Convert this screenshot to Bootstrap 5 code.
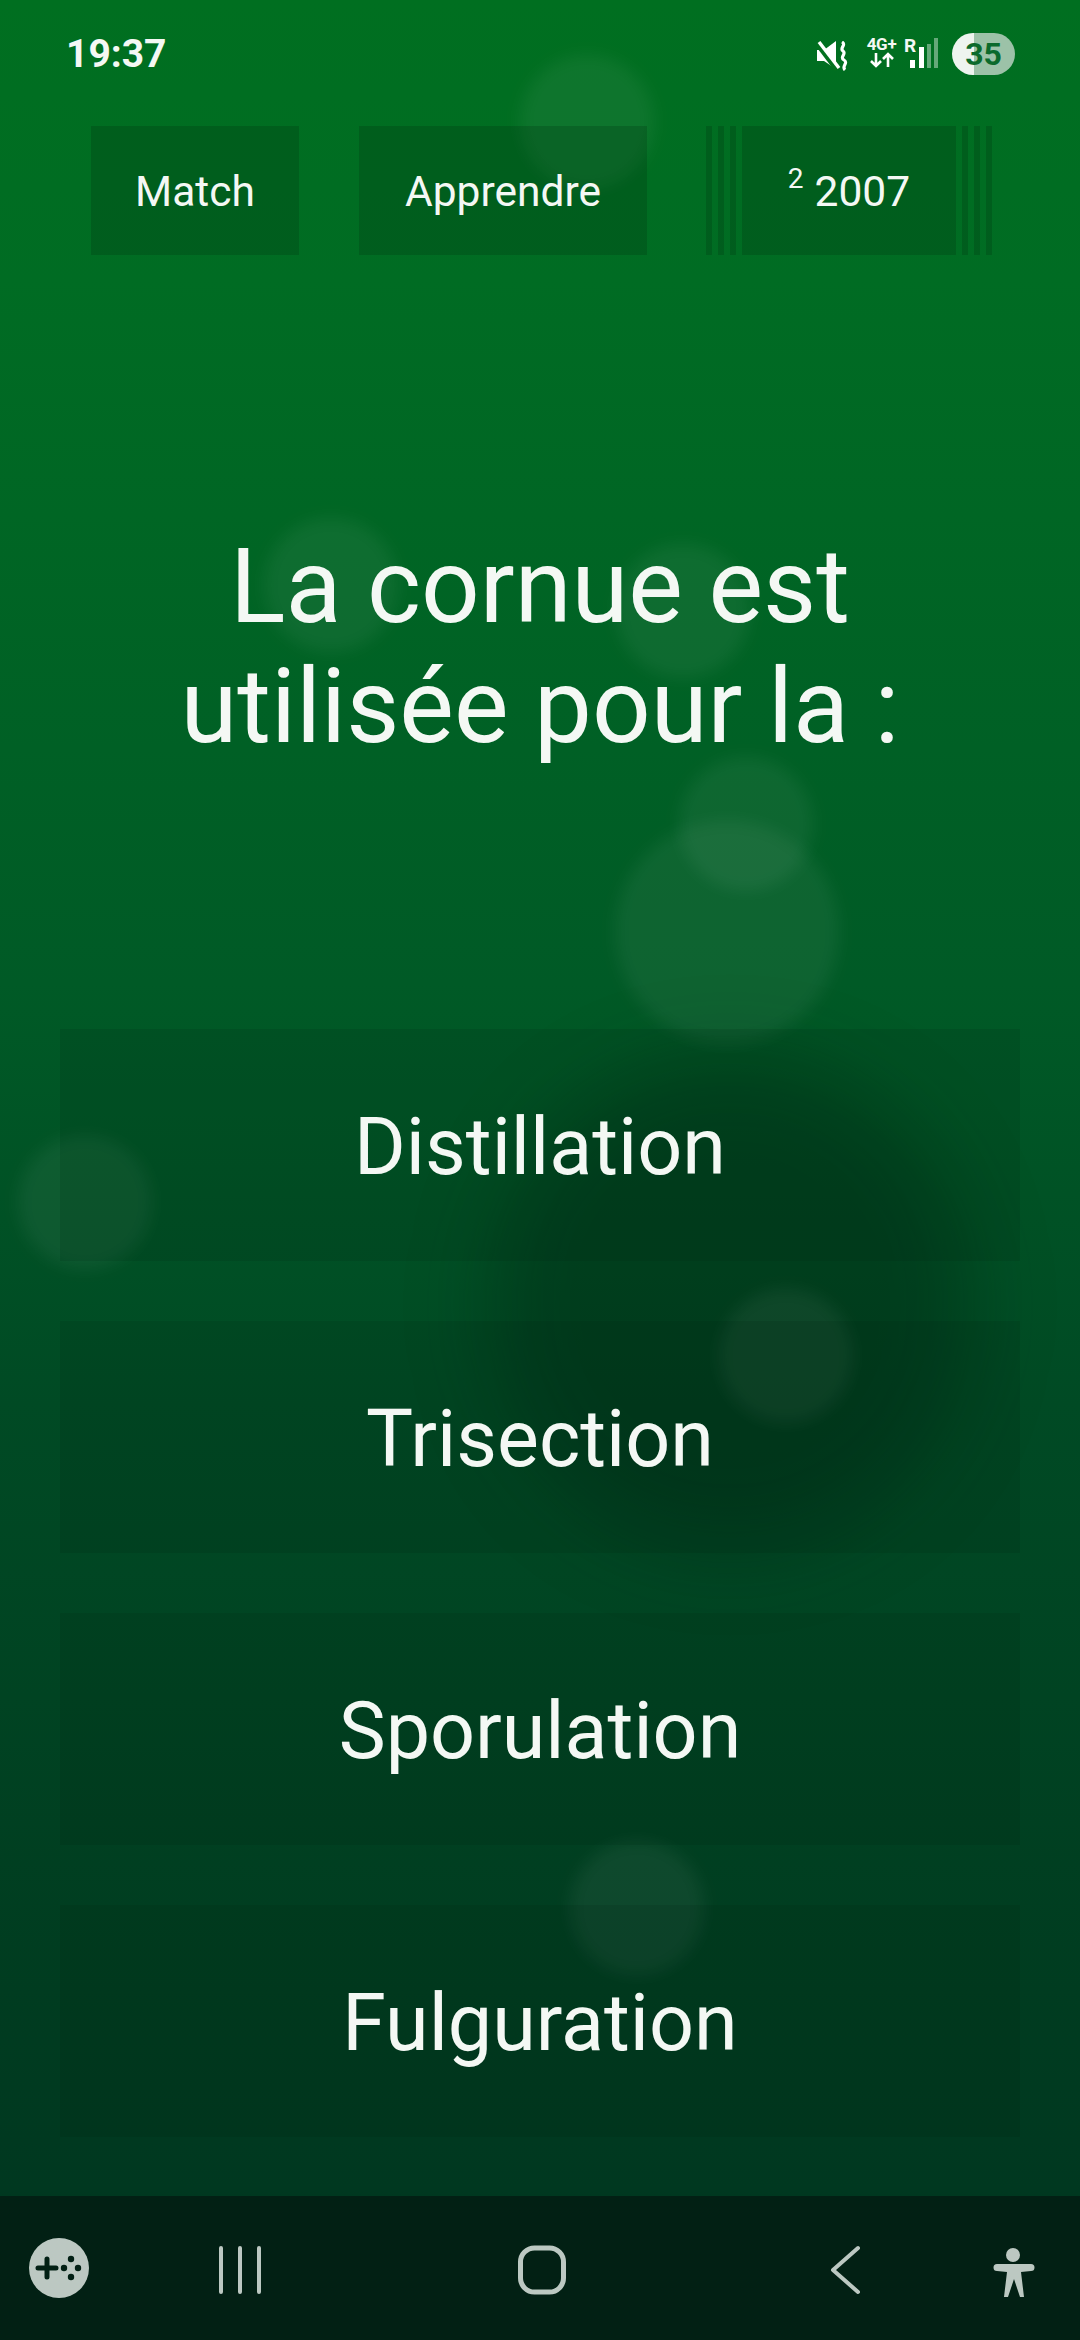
<!DOCTYPE html>
<html lang="fr">

<head>
    <meta charset="UTF-8">
    <meta name="viewport" content="width=device-width, initial-scale=1.0">
    <title>Quiz</title>
    <link href="https://cdn.jsdelivr.net/npm/bootstrap@5.3.2/dist/css/bootstrap.min.css" rel="stylesheet">
    <style>
        body {
            margin: 0;
            width: 1080px;
            height: 2340px;
            overflow: hidden;
            font-family: Roboto, sans-serif;
            color: #f4f8f4;
        }

        .screen {
            width: 1080px;
            height: 2340px;
            overflow: hidden;
            background: linear-gradient(180deg, #006f20 0%, #006c23 12%, #005a26 42%, #004a24 60%, #003c20 85%, #003520 100%);
        }

        /* floating decoration, sits under the page content */
        .bubble {
            position: absolute;
            border-radius: 50%;
            background: rgba(255, 255, 255, .055);
            filter: blur(8px);
            pointer-events: none;
        }

        .bubble-dark {
            position: absolute;
            left: 490px;
            top: 1060px;
            width: 480px;
            height: 490px;
            border-radius: 50%;
            background: rgba(0, 30, 15, .34);
            filter: blur(40px);
            pointer-events: none;
        }

        .page-flow {
            z-index: 1;
        }

        .status-row {
            height: 126px;
            padding: 33px 65px 0 66px;
        }

        .clock {
            font-size: 39px;
            font-weight: 700;
            line-height: 42px;
        }

        .mute-icon {
            margin-right: 16px;
        }

        .net-box {
            width: 33px;
            margin-right: 9px;
            margin-top: 4px;
        }

        .net-label {
            font-size: 17px;
            font-weight: 700;
            line-height: 15px;
            letter-spacing: -.3px;
            white-space: nowrap;
        }

        .signal-box {
            width: 31px;
            height: 42px;
            margin-right: 14px;
        }

        .roam-label {
            position: absolute;
            left: -3px;
            top: 4px;
            font-size: 19px;
            font-weight: 700;
            line-height: 17px;
        }

        .level-pill {
            width: 63px;
            height: 42px;
            border-radius: 21px;
            background: linear-gradient(90deg, #eef4ef 0 35%, #9cc2a8 35% 100%);
            color: #0b6a2c;
            font-size: 32px;
            font-weight: 700;
            line-height: 42px;
            text-align: center;
        }

        .top-row {
            height: 129px;
            padding-left: 91px;
            gap: 60px;
        }

        .top-btn {
            height: 129px;
            padding-top: 3px;
            background: rgba(0, 40, 15, .22);
            font-size: 42.5px;
        }

        .btn-match { width: 208px; }
        .btn-learn { width: 288px; }
        .btn-year { width: 214px; }

        .year-group {
            gap: 6px;
            margin-left: -1px;
        }

        .stripe {
            width: 6px;
            height: 129px;
            background: rgba(0, 40, 15, .22);
        }

        .level-sup {
            font-size: 28px;
            position: relative;
            top: -13px;
            margin-right: 11px;
        }

        .question {
            margin: 0;
            padding-top: 272px;
            height: 774px;
            font-size: 103px;
            font-weight: 400;
            line-height: 120px;
        }

        .answers {
            padding: 0 60px;
            gap: 60px;
        }

        .answer {
            height: 232px;
            padding-top: 5px;
            background: rgba(0, 30, 15, .13);
            font-size: 79px;
        }

        .bottom-bar {
            position: absolute;
            left: 0;
            right: 0;
            bottom: 0;
            height: 144px;
            background: #022014;
        }
    </style>
</head>

<body>
    <div class="screen position-relative">
        <div class="bubble-dark"></div>
        <div class="bubble" style="left:520px;top:55px;width:134px;height:134px"></div>
        <div class="bubble" style="left:264px;top:518px;width:134px;height:134px"></div>
        <div class="bubble" style="left:616px;top:544px;width:134px;height:134px"></div>
        <div class="bubble" style="left:679px;top:757px;width:134px;height:134px"></div>
        <div class="bubble" style="left:615px;top:820px;width:224px;height:224px"></div>
        <div class="bubble" style="left:18px;top:1135px;width:134px;height:134px"></div>
        <div class="bubble" style="left:719px;top:1289px;width:134px;height:134px"></div>
        <div class="bubble" style="left:570px;top:1841px;width:134px;height:134px"></div>

        <div class="page-flow position-relative d-flex flex-column">
            <!-- status bar -->
            <div class="status-row d-flex justify-content-between align-items-start">
                <div class="clock">19:37</div>
                <div class="d-flex align-items-start">
                    <svg width="32" height="30" viewBox="0 0 32 30" fill="#fff" class="mute-icon mt-2">
                        <path d="M0 9h7L19 0v28L7 20H0z" />
                        <path d="M1 4l19 25" stroke="#03701f" stroke-width="5" />
                        <path d="M2 1l20 26" stroke="#fff" stroke-width="3.4" />
                        <path d="M25 1c5 3-3 6 1 9s-4 6 1 9-3 6 1 10" fill="none" stroke="#fff" stroke-width="3.2" />
                    </svg>
                    <div class="net-box text-center">
                        <div class="net-label">4G+</div>
                        <svg width="26" height="16" viewBox="0 0 26 16" fill="none" stroke="#fff" stroke-width="2.6" class="d-block mx-auto">
                            <path d="M7 1v13M2 9l5 5 5-5M19 15V2M14 7l5-5 5 5" />
                        </svg>
                    </div>
                    <div class="signal-box position-relative">
                        <div class="roam-label">R</div>
                        <svg width="31" height="42" viewBox="0 0 31 42" class="d-block">
                            <rect x="3" y="27" width="5" height="8" fill="#fff" />
                            <rect x="12" y="14" width="5" height="21" fill="#fff" />
                            <rect x="20" y="11" width="4" height="24" fill="#fff" fill-opacity=".4" />
                            <rect x="27" y="5" width="4" height="30" fill="#fff" fill-opacity=".4" />
                        </svg>
                    </div>
                    <div class="level-pill">35</div>
                </div>
            </div>

            <!-- top buttons -->
            <div class="top-row d-flex">
                <div class="top-btn btn-match d-flex align-items-center justify-content-center">Match</div>
                <div class="top-btn btn-learn d-flex align-items-center justify-content-center">Apprendre</div>
                <div class="year-group d-flex">
                    <span class="stripe"></span><span class="stripe"></span><span class="stripe"></span>
                    <div class="top-btn btn-year d-flex align-items-center justify-content-center"><span class="level-sup">2</span>2007</div>
                    <span class="stripe"></span><span class="stripe"></span><span class="stripe"></span>
                </div>
            </div>

            <h1 class="question text-center">La cornue est<br>utilisée pour la :</h1>

            <!-- answers -->
            <div class="answers d-flex flex-column">
                <div class="answer d-flex align-items-center justify-content-center">Distillation</div>
                <div class="answer d-flex align-items-center justify-content-center">Trisection</div>
                <div class="answer d-flex align-items-center justify-content-center">Sporulation</div>
                <div class="answer d-flex align-items-center justify-content-center">Fulguration</div>
            </div>
        </div>

        <!-- android nav bar -->
        <div class="bottom-bar">
            <svg width="1080" height="144" viewBox="0 0 1080 144" class="d-block">
                <circle cx="59" cy="72" r="30" fill="#bcc8c2" />
                <path d="M38 72h18M47 63v18" stroke="#022014" stroke-width="5" stroke-linecap="round" />
                <g fill="#022014">
                    <circle cx="71" cy="63" r="3.2" />
                    <circle cx="71" cy="81" r="3.2" />
                    <circle cx="64" cy="72" r="3.2" />
                    <circle cx="78" cy="72" r="3.2" />
                </g>
                <path d="M221 52v44M240 52v44M259 52v44" stroke="#bcc8c2" stroke-width="4" stroke-linecap="round" />
                <rect x="520.5" y="52" width="43" height="44" rx="14" fill="none" stroke="#bcc8c2" stroke-width="5" />
                <path d="M858 52 L833 74 L858 96" fill="none" stroke="#bcc8c2" stroke-width="4" stroke-linecap="round" stroke-linejoin="round" />
                <circle cx="1013" cy="59" r="7" fill="#bcc8c2" />
                <path d="M997 68h34a3 3 0 0 1 0 7l-10 1 3 25h-4l-6-18-6 18h-4l3-25-10-1a3 3 0 0 1 0-7z" fill="#bcc8c2" />
            </svg>
        </div>
    </div>

    <script src="https://cdn.jsdelivr.net/npm/bootstrap@5.3.2/dist/js/bootstrap.bundle.min.js"></script>
</body>

</html>
